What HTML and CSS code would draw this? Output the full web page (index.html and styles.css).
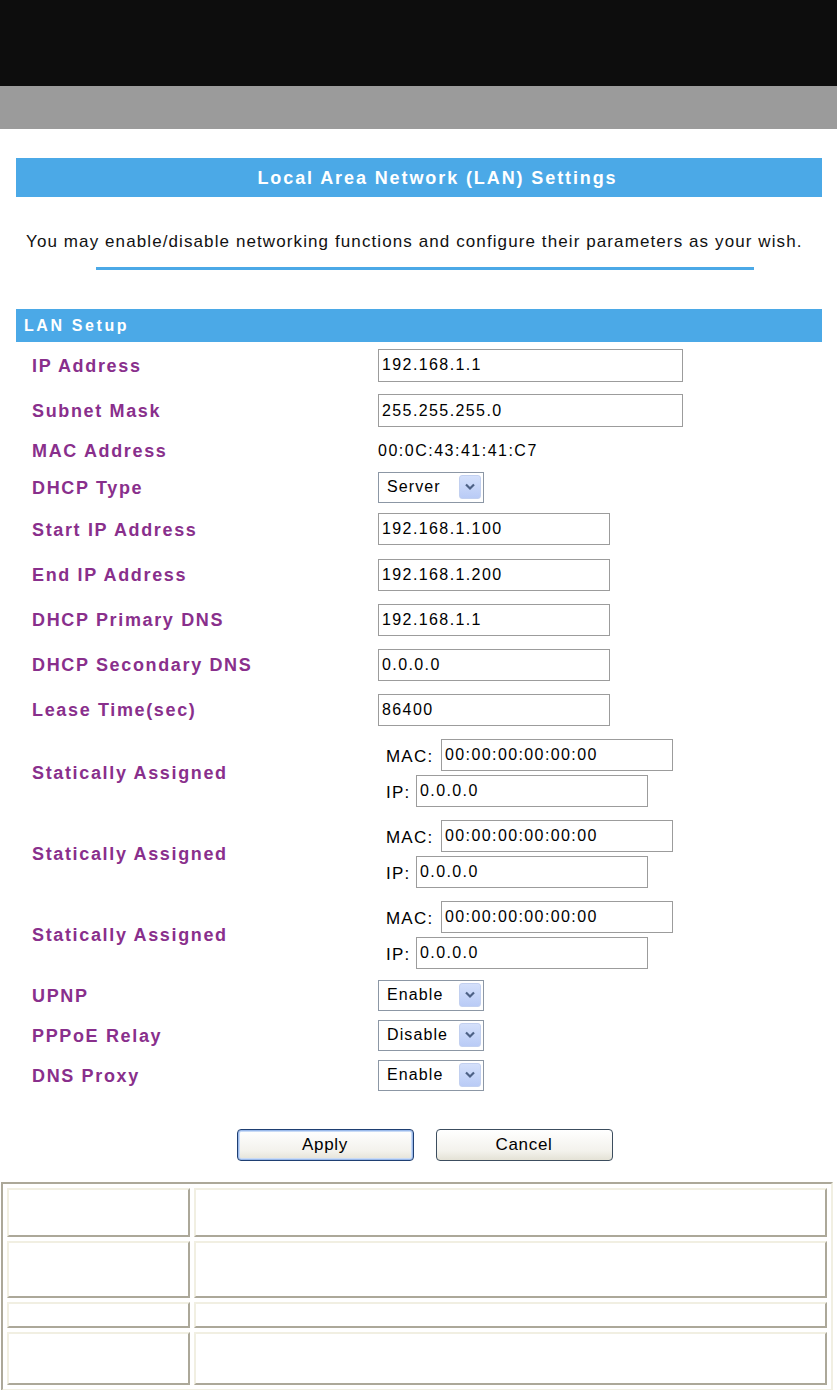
FILE: index.html
```html
<!DOCTYPE html>
<html lang="en">
<head>
<meta charset="utf-8">
<title>Local Area Network (LAN) Settings</title>
<link rel="stylesheet" href="styles.css">
</head>
<body>
<header class="topbar"></header>
<div class="subbar"></div>

<main class="content">
  <h1 class="page-title">Local Area Network (LAN) Settings</h1>
  <p class="intro">You may enable/disable networking functions and configure their parameters as your wish.</p>
  <hr class="divider">

  <section class="lan">
    <h2 class="section-title">LAN Setup</h2>
    <div class="form">
      <div class="row row--tall"><span class="label">IP Address</span><div class="value"><span class="input input--long">192.168.1.1</span></div></div>
      <div class="row"><span class="label">Subnet Mask</span><div class="value"><span class="input input--long">255.255.255.0</span></div></div>
      <div class="row row--short"><span class="label">MAC Address</span><div class="value"><span class="plain">00:0C:43:41:41:C7</span></div></div>
      <div class="row row--select"><span class="label">DHCP Type</span><div class="value"><span class="select"><span class="select-text">Server</span><span class="select-arrow"><svg width="12" height="8" viewBox="0 0 12 8"><path d="M2 1.5 L6 5.5 L10 1.5" fill="none" stroke="#4d6185" stroke-width="2.2"/></svg></span></span></div></div>
      <div class="row row--tall"><span class="label">Start IP Address</span><div class="value"><span class="input">192.168.1.100</span></div></div>
      <div class="row"><span class="label">End IP Address</span><div class="value"><span class="input">192.168.1.200</span></div></div>
      <div class="row"><span class="label">DHCP Primary DNS</span><div class="value"><span class="input">192.168.1.1</span></div></div>
      <div class="row"><span class="label">DHCP Secondary DNS</span><div class="value"><span class="input">0.0.0.0</span></div></div>
      <div class="row"><span class="label">Lease Time(sec)</span><div class="value"><span class="input">86400</span></div></div>

      <div class="row row--static"><span class="label">Statically Assigned</span>
        <div class="value static">
          <div class="static-line"><span class="static-label static-label--mac">MAC:</span><span class="input">00:00:00:00:00:00</span></div>
          <div class="static-line"><span class="static-label static-label--ip">IP:</span><span class="input">0.0.0.0</span></div>
        </div>
      </div>
      <div class="row row--static"><span class="label">Statically Assigned</span>
        <div class="value static">
          <div class="static-line"><span class="static-label static-label--mac">MAC:</span><span class="input">00:00:00:00:00:00</span></div>
          <div class="static-line"><span class="static-label static-label--ip">IP:</span><span class="input">0.0.0.0</span></div>
        </div>
      </div>
      <div class="row row--static"><span class="label">Statically Assigned</span>
        <div class="value static">
          <div class="static-line"><span class="static-label static-label--mac">MAC:</span><span class="input">00:00:00:00:00:00</span></div>
          <div class="static-line"><span class="static-label static-label--ip">IP:</span><span class="input">0.0.0.0</span></div>
        </div>
      </div>

      <div class="row row--opt"><span class="label">UPNP</span><div class="value"><span class="select"><span class="select-text">Enable</span><span class="select-arrow"><svg width="12" height="8" viewBox="0 0 12 8"><path d="M2 1.5 L6 5.5 L10 1.5" fill="none" stroke="#4d6185" stroke-width="2.2"/></svg></span></span></div></div>
      <div class="row row--opt"><span class="label">PPPoE Relay</span><div class="value"><span class="select"><span class="select-text">Disable</span><span class="select-arrow"><svg width="12" height="8" viewBox="0 0 12 8"><path d="M2 1.5 L6 5.5 L10 1.5" fill="none" stroke="#4d6185" stroke-width="2.2"/></svg></span></span></div></div>
      <div class="row row--opt"><span class="label">DNS Proxy</span><div class="value"><span class="select"><span class="select-text">Enable</span><span class="select-arrow"><svg width="12" height="8" viewBox="0 0 12 8"><path d="M2 1.5 L6 5.5 L10 1.5" fill="none" stroke="#4d6185" stroke-width="2.2"/></svg></span></span></div></div>
    </div>
  </section>

  <div class="actions">
    <button class="btn btn--default" type="button">Apply</button>
    <button class="btn" type="button">Cancel</button>
  </div>
</main>

<table class="help">
  <tr><td class="help-key help-r1"></td><td class="help-r1"></td></tr>
  <tr><td class="help-key help-r2"></td><td class="help-r2"></td></tr>
  <tr><td class="help-key help-r3"></td><td class="help-r3"></td></tr>
  <tr><td class="help-key help-r4"></td><td class="help-r4"></td></tr>
</table>
</body>
</html>
```

FILE: styles.css
```css
* { box-sizing: border-box; }

html, body {
  margin: 0;
  padding: 0;
  background: #ffffff;
  font-family: "Liberation Sans", Arial, sans-serif;
  color: #111111;
}

.topbar {
  height: 86px;
  background: #0d0d0d;
}

.subbar {
  height: 43px;
  background: #9b9b9b;
}

.content {
  padding: 0 15px 0 16px;
}

.page-title {
  margin: 29px 0 0;
  height: 39px;
  line-height: 40px;
  background: #4ba9e7;
  color: #ffffff;
  font-size: 18px;
  font-weight: bold;
  letter-spacing: 1.9px;
  text-align: center;
  padding-left: 37px;
}

.intro {
  margin: 35px 0 0 10px;
  font-size: 17px;
  line-height: 20px;
  letter-spacing: 1.1px;
  color: #111111;
  white-space: nowrap;
}

.divider {
  margin: 15px 0 0 80px;
  width: 658px;
  height: 3px;
  border: 0;
  background: #4ba9e7;
}

.lan {
  margin-top: 39px;
}

.section-title {
  margin: 0;
  height: 33px;
  line-height: 33px;
  background: #4ba9e7;
  color: #ffffff;
  font-size: 16px;
  font-weight: bold;
  letter-spacing: 2.6px;
  padding-left: 8px;
}

.form {
  display: flex;
  flex-direction: column;
}

.row {
  display: grid;
  grid-template-columns: 362px 1fr;
  align-items: center;
  height: 45px;
}
.row--tall { height: 46px; }
.row--short { height: 35px; }
.row--select { height: 38px; }
.row--static { height: 81px; }
.row--opt { height: 40px; }

.label {
  padding-left: 16px;
  padding-top: 2px;
  color: #892f8c;
  font-size: 18px;
  font-weight: bold;
  letter-spacing: 1.65px;
  white-space: nowrap;
}

.value {
  display: flex;
  align-items: center;
}

.input {
  display: inline-flex;
  align-items: center;
  width: 232px;
  height: 32px;
  padding-left: 3px;
  border: 1px solid #9c9c9c;
  background: #ffffff;
  font-size: 16px;
  letter-spacing: 1.4px;
  color: #000000;
  white-space: nowrap;
}
.input--long {
  width: 305px;
  height: 33px;
}

.plain {
  font-size: 16px;
  letter-spacing: 1.5px;
  color: #000000;
}

.select {
  display: inline-flex;
  align-items: center;
  justify-content: space-between;
  width: 106px;
  height: 31px;
  padding: 0 2px 0 8px;
  border: 1px solid #8c97a5;
  background: #ffffff;
}
.select-text {
  font-size: 16px;
  letter-spacing: 1.1px;
  color: #000000;
}
.select-arrow {
  display: flex;
  align-items: center;
  justify-content: center;
  width: 22px;
  height: 24px;
  border-radius: 3px;
  background: linear-gradient(#d4e0fb, #b9cbf6);
  border: 1px solid #c2d0f0;
}

.static {
  flex-direction: column;
  align-items: flex-start;
  gap: 4px;
  padding-left: 8px;
}
.static-line {
  display: flex;
  align-items: center;
}
.static-label {
  font-size: 17px;
  letter-spacing: 1.2px;
  color: #000000;
  padding-top: 4px;
}
.static-label--mac { width: 55px; }
.static-label--ip { width: 30px; }

.actions {
  display: flex;
  justify-content: center;
  gap: 22px;
  margin-top: 34px;
  padding-left: 11px;
}

.btn {
  width: 177px;
  height: 32px;
  border: 1px solid #3c4d5e;
  border-radius: 4px;
  background: linear-gradient(#ffffff, #f3f2ec 70%, #e4e2d6);
  font-family: "Liberation Sans", Arial, sans-serif;
  font-size: 17px;
  letter-spacing: 0.7px;
  color: #000000;
  padding: 0;
}
.btn--default {
  border-color: #1f3f72;
  box-shadow: inset 0 0 0 1px #9ab9ea, inset 0 0 0 2px #c9dbf6;
}

.help {
  margin: 21px 0 0 1px;
  width: 832px;
  border-collapse: separate;
  border-spacing: 4px;
  border: 2px solid;
  border-color: #aca899 #f1efe2 #f1efe2 #aca899;
}
.help td {
  border: 2px solid;
  border-color: #f1efe2 #aca899 #aca899 #f1efe2;
  padding: 0;
}
.help-key { width: 183px; }
.help-r1 { height: 49px; }
.help-r2 { height: 57px; }
.help-r3 { height: 26px; }
.help-r4 { height: 53px; }
```
